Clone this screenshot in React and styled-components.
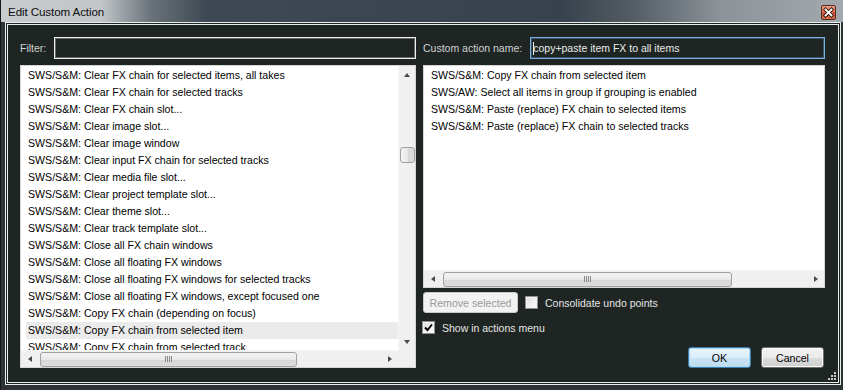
import React from "react";
import styled, { createGlobalStyle, css } from "styled-components";

const GlobalStyle = createGlobalStyle`
  html, body { margin: 0; padding: 0; background: #000; }
  * { box-sizing: border-box; }
  body { font-family: "Liberation Sans", Arial, sans-serif; }
`;

const Window = styled.div`
  width: 843px;
  height: 390px;
  display: flex;
  flex-direction: column;
  background: #2c3337;
  border-left: 1px solid #15191b;
  overflow: hidden;
`;

const TitleBar = styled.div`
  height: 22px;
  flex: none;
  display: flex;
  align-items: center;
  justify-content: space-between;
  padding: 0 7px 0 7px;
  background: linear-gradient(
    90deg,
    #c7cbce 0px,
    #c2c6c9 100px,
    #6a737a 150px,
    #3f4953 205px,
    #38424c 560px,
    #535c64 630px,
    #8c9399 720px,
    #a3a9ad 843px
  );
`;

const Title = styled.span`
  font-size: 11.6px;
  color: #0d0d0d;
  letter-spacing: -0.1px;
`;

const CloseButton = styled.div`
  width: 15px;
  height: 15px;
  margin-top: 2px;
  border: 1px solid #5b2a1f;
  border-radius: 2px;
  background: linear-gradient(180deg, #ec9f89 0%, #dc6d50 45%, #c84f33 55%, #d7714f 100%);
  display: flex;
  align-items: center;
  justify-content: center;
`;

const Client = styled.div`
  flex: 1;
  min-height: 0;
  margin: 0 2px 5px 4px;
  border: 1px solid #e9ecec;
  padding: 1px;
  background: #1f2523;
  display: flex;
`;

const ClientInner = styled.div`
  flex: 1;
  position: relative;
  border: 1px solid #e9ecec;
  background: #1f2523;
  display: grid;
  grid-template-columns: 396px minmax(0, 1fr);
  grid-template-rows: minmax(0, 1fr);
  column-gap: 7px;
  padding: 12px 13px 14px 12px;
`;

const Column = styled.div`
  display: flex;
  flex-direction: column;
  min-width: 0;
  min-height: 0;
`;

const FieldRow = styled.div`
  height: 22px;
  flex: none;
  display: flex;
  align-items: center;
  gap: 8px;
`;

const Label = styled.span`
  font-size: 10.5px;
  color: #cfd3d2;
  white-space: nowrap;
`;

const TextField = styled.div`
  flex: 1;
  height: 22px;
  display: flex;
  align-items: center;
  padding-left: 2px;
  font-size: 10.5px;
  color: #e8ecea;
  white-space: nowrap;
  overflow: hidden;
  border: 1px solid ${(p) => (p.$focused ? "#78afe3" : "#f0f2f2")};
  box-shadow: inset 0 0 0 1px ${(p) => (p.$focused ? "rgba(120,175,227,0.35)" : "rgba(230,235,235,0.35)")};
  background: #1f2523;
`;

const Caret = styled.span`
  width: 1px;
  height: 13px;
  background: #f2f2f2;
  margin-right: -1px;
  flex: none;
`;

const ListBox = styled.div`
  flex: ${(p) => (p.$height ? "none" : "1 1 0")};
  min-height: 0;
  height: ${(p) => (p.$height ? `${p.$height}px` : "auto")};
  margin-top: 6px;
  border: 1px solid #d4d6d6;
  background: #fff;
  display: grid;
  grid-template-columns: ${(p) => (p.$vscroll ? "minmax(0, 1fr) 17px" : "minmax(0, 1fr)")};
  grid-template-rows: minmax(0, 1fr) 17px;
  grid-template-areas: ${(p) =>
    p.$vscroll ? `"content vscroll" "hscroll corner"` : `"content" "hscroll"`};
  overflow: hidden;
`;

const ListContent = styled.div`
  grid-area: content;
  overflow: hidden;
  padding: 1px 0 0 5px;
  min-width: 0;
  min-height: 0;
`;

const Row = styled.div`
  height: 17px;
  line-height: 17px;
  padding-left: 2px;
  font-size: 10.6px;
  color: #000;
  white-space: nowrap;
  background: ${(p) => (p.$selected ? "#ebebeb" : "transparent")};
`;

const VScroll = styled.div`
  grid-area: vscroll;
  display: flex;
  flex-direction: column;
  background: #f0f0f0;
  border-left: 1px solid #f7f7f7;
  min-height: 0;
`;

const HScroll = styled.div`
  grid-area: hscroll;
  display: flex;
  background: #f0f0f0;
  border-top: 1px solid #f7f7f7;
`;

const Corner = styled.div`
  grid-area: corner;
  background: #f0f0f0;
`;

const ArrowCell = styled.div`
  width: ${(p) => (p.$vertical ? "100%" : "17px")};
  height: ${(p) => (p.$vertical ? "17px" : "100%")};
  flex: none;
  display: flex;
  align-items: center;
  justify-content: center;
`;

const arrowDirs = {
  up: css`
    border-left: 3.5px solid transparent;
    border-right: 3.5px solid transparent;
    border-bottom: 4px solid #4a4a4a;
  `,
  down: css`
    border-left: 3.5px solid transparent;
    border-right: 3.5px solid transparent;
    border-top: 4px solid #4a4a4a;
  `,
  left: css`
    border-top: 3.5px solid transparent;
    border-bottom: 3.5px solid transparent;
    border-right: 4px solid #4a4a4a;
  `,
  right: css`
    border-top: 3.5px solid transparent;
    border-bottom: 3.5px solid transparent;
    border-left: 4px solid #4a4a4a;
  `,
};

const Arrow = styled.span`
  width: 0;
  height: 0;
  ${(p) => arrowDirs[p.$dir]}
`;

const Track = styled.div`
  flex: 1;
  min-height: 0;
  display: flex;
  flex-direction: ${(p) => (p.$vertical ? "column" : "row")};
  align-items: center;
`;

const Thumb = styled.div`
  flex: none;
  border: 1px solid #a0a0a0;
  border-radius: 3px;
  background: ${(p) =>
    p.$vertical
      ? "linear-gradient(90deg, #f4f4f4 0%, #e8e8e8 50%, #d6d6d6 51%, #dcdcdc 100%)"
      : "linear-gradient(180deg, #f4f4f4 0%, #e8e8e8 50%, #d6d6d6 51%, #dcdcdc 100%)"};
  display: flex;
  align-items: center;
  justify-content: center;
  ${(p) =>
    p.$vertical
      ? css`
          width: 15px;
        `
      : css`
          height: 15px;
        `}
`;

const Grip = styled.span`
  width: 7px;
  height: 6px;
  background: repeating-linear-gradient(90deg, #8a8a8a 0 1px, transparent 1px 2px);
`;

const OptionsRow = styled.div`
  margin-top: ${(p) => p.$top}px;
  display: flex;
  align-items: center;
  gap: 7px;
  flex: none;
`;

const Button = styled.div`
  height: 21px;
  width: ${(p) => p.$width}px;
  display: flex;
  align-items: center;
  justify-content: center;
  font-size: 10.6px;
  border-radius: 3px;
  flex: none;
  ${(p) =>
    p.$disabled
      ? css`
          color: #9a9a9a;
          border: 1px solid #c9c9c9;
          background: #f2f2f2;
        `
      : p.$default
      ? css`
          color: #000;
          border: 1px solid #3c7fb1;
          background: linear-gradient(180deg, #eaf5fc 0%, #dbeef9 50%, #c6e2f4 51%, #c0dcef 100%);
          box-shadow: inset 0 0 0 1px #a9d6f3;
        `
      : css`
          color: #000;
          border: 1px solid #707070;
          background: linear-gradient(180deg, #f2f2f2 0%, #ebebeb 50%, #dddddd 51%, #cfcfcf 100%);
          box-shadow: inset 0 0 0 1px #fbfbfb;
        `}
`;

const CheckLabel = styled.label`
  display: flex;
  align-items: center;
  gap: 7px;
  font-size: 10.5px;
  color: #e3e6e5;
  white-space: nowrap;
  margin-left: ${(p) => p.$shift || 0}px;
`;

const CheckBox = styled.span`
  width: 13px;
  height: 13px;
  flex: none;
  border: 1px solid #8e8f8f;
  background: linear-gradient(135deg, #dcdcdc 0%, #ffffff 100%);
  box-shadow: inset 0 0 0 1px #f4f4f4;
  display: flex;
  align-items: center;
  justify-content: center;
`;

const ButtonRow = styled.div`
  margin-top: auto;
  display: flex;
  justify-content: flex-end;
  gap: 10px;
  padding-right: 1px;
`;

const ResizeGrip = styled.svg`
  position: absolute;
  right: 2px;
  bottom: 2px;
`;

const leftItems = [
  "SWS/S&M: Clear FX chain for selected items, all takes",
  "SWS/S&M: Clear FX chain for selected tracks",
  "SWS/S&M: Clear FX chain slot...",
  "SWS/S&M: Clear image slot...",
  "SWS/S&M: Clear image window",
  "SWS/S&M: Clear input FX chain for selected tracks",
  "SWS/S&M: Clear media file slot...",
  "SWS/S&M: Clear project template slot...",
  "SWS/S&M: Clear theme slot...",
  "SWS/S&M: Clear track template slot...",
  "SWS/S&M: Close all FX chain windows",
  "SWS/S&M: Close all floating FX windows",
  "SWS/S&M: Close all floating FX windows for selected tracks",
  "SWS/S&M: Close all floating FX windows, except focused one",
  "SWS/S&M: Copy FX chain (depending on focus)",
  "SWS/S&M: Copy FX chain from selected item",
  "SWS/S&M: Copy FX chain from selected track",
];

const rightItems = [
  "SWS/S&M: Copy FX chain from selected item",
  "SWS/AW: Select all items in group if grouping is enabled",
  "SWS/S&M: Paste (replace) FX chain to selected items",
  "SWS/S&M: Paste (replace) FX chain to selected tracks",
];

function HScrollBar({ thumbLeft, thumbWidth }) {
  return (
    <HScroll>
      <ArrowCell>
        <Arrow $dir="left" />
      </ArrowCell>
      <Track>
        <Thumb style={{ marginLeft: thumbLeft, width: thumbWidth }}>
          <Grip />
        </Thumb>
      </Track>
      <ArrowCell>
        <Arrow $dir="right" />
      </ArrowCell>
    </HScroll>
  );
}

function VScrollBar({ thumbTop, thumbHeight }) {
  return (
    <VScroll>
      <ArrowCell $vertical>
        <Arrow $dir="up" />
      </ArrowCell>
      <Track $vertical>
        <Thumb $vertical style={{ marginTop: thumbTop, height: thumbHeight }} />
      </Track>
      <ArrowCell $vertical>
        <Arrow $dir="down" />
      </ArrowCell>
    </VScroll>
  );
}

function Check({ checked }) {
  return (
    <CheckBox>
      {checked && (
        <svg width="9" height="9" viewBox="0 0 9 9">
          <path d="M1 4.5 L3.5 7 L8 1.5" fill="none" stroke="#000" strokeWidth="1.9" />
        </svg>
      )}
    </CheckBox>
  );
}

export default function App() {
  return (
    <>
      <GlobalStyle />
      <Window>
        <TitleBar>
          <Title>Edit Custom Action</Title>
          <CloseButton>
            <svg width="11" height="11" viewBox="0 0 11 11">
              <path d="M2.5 2.5 L8.5 8.5 M8.5 2.5 L2.5 8.5" stroke="#2b1510" strokeWidth="3.6" strokeLinecap="square" />
              <path d="M2.5 2.5 L8.5 8.5 M8.5 2.5 L2.5 8.5" stroke="#ffffff" strokeWidth="1.8" strokeLinecap="square" />
            </svg>
          </CloseButton>
        </TitleBar>
        <Client>
          <ClientInner>
            <Column>
              <FieldRow>
                <Label>Filter:</Label>
                <TextField />
              </FieldRow>
              <ListBox $vscroll>
                <ListContent>
                  {leftItems.map((t, i) => (
                    <Row key={i} $selected={i === 15}>
                      {t}
                    </Row>
                  ))}
                </ListContent>
                <VScrollBar thumbTop={64} thumbHeight={16} />
                <HScrollBar thumbLeft={2} thumbWidth={257} />
                <Corner />
              </ListBox>
            </Column>
            <Column>
              <FieldRow>
                <Label>Custom action name:</Label>
                <TextField $focused>
                  <Caret />
                  copy+paste item FX to all items
                </TextField>
              </FieldRow>
              <ListBox $height={223}>
                <ListContent>
                  {rightItems.map((t, i) => (
                    <Row key={i}>{t}</Row>
                  ))}
                </ListContent>
                <HScrollBar thumbLeft={2} thumbWidth={289} />
              </ListBox>
              <OptionsRow $top={4}>
                <Button $width={95} $disabled>
                  Remove selected
                </Button>
                <CheckLabel>
                  <Check />
                  Consolidate undo points
                </CheckLabel>
              </OptionsRow>
              <OptionsRow $top={8}>
                <CheckLabel $shift={-1}>
                  <Check checked />
                  Show in actions menu
                </CheckLabel>
              </OptionsRow>
              <ButtonRow>
                <Button $width={63} $default>
                  OK
                </Button>
                <Button $width={63}>Cancel</Button>
              </ButtonRow>
            </Column>
            <ResizeGrip width="8" height="8" viewBox="0 0 8 8">
              <rect x="6" y="0" width="2" height="2" fill="#c9cccc" />
              <rect x="3" y="3" width="2" height="2" fill="#c9cccc" />
              <rect x="6" y="3" width="2" height="2" fill="#c9cccc" />
              <rect x="0" y="6" width="2" height="2" fill="#c9cccc" />
              <rect x="3" y="6" width="2" height="2" fill="#c9cccc" />
              <rect x="6" y="6" width="2" height="2" fill="#c9cccc" />
            </ResizeGrip>
          </ClientInner>
        </Client>
      </Window>
    </>
  );
}
